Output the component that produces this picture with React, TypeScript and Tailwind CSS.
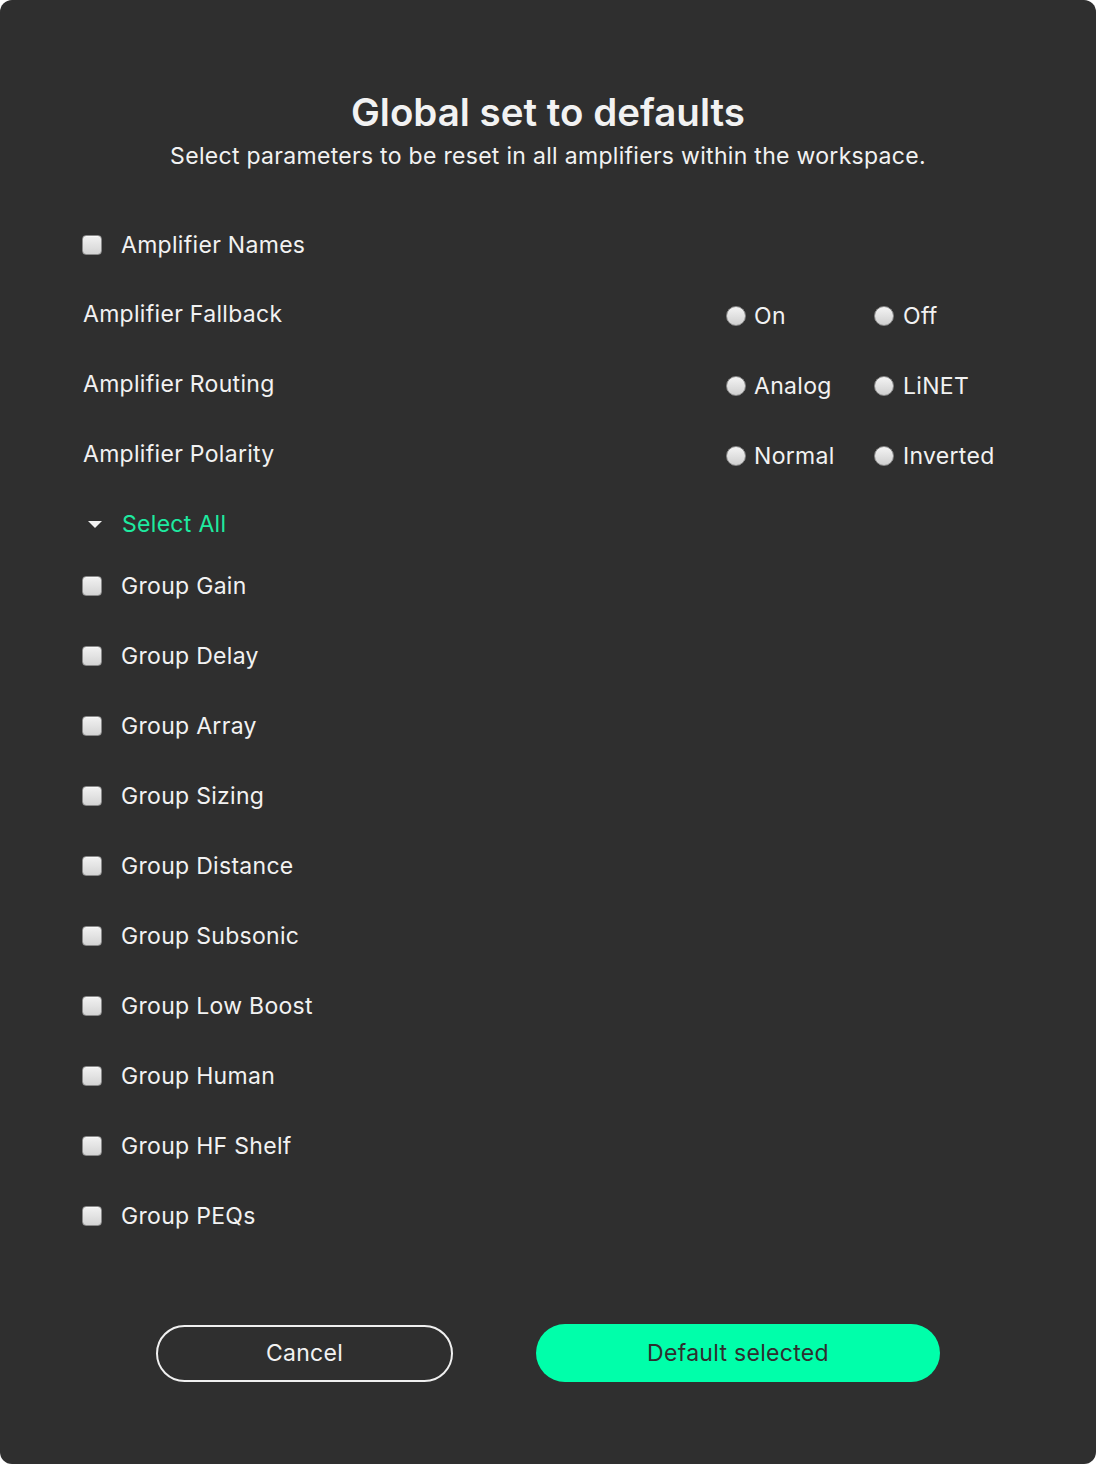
import React from "react";

const groups = [
  "Group Gain",
  "Group Delay",
  "Group Array",
  "Group Sizing",
  "Group Distance",
  "Group Subsonic",
  "Group Low Boost",
  "Group Human",
  "Group HF Shelf",
  "Group PEQs",
];

const radios: [string, string, string][] = [
  ["Amplifier Fallback", "On", "Off"],
  ["Amplifier Routing", "Analog", "LiNET"],
  ["Amplifier Polarity", "Normal", "Inverted"],
];

function Box() {
  return (
    <span className="block w-[20px] h-[20px] rounded-[4px] border border-[#8a8a8a] bg-gradient-to-b from-[#f2f2f2] to-[#d4d4d4] shadow-[inset_0_1px_0_rgba(255,255,255,0.6)]" />
  );
}

function Dot() {
  return (
    <span className="block w-[20px] h-[20px] rounded-full border border-[#8a8a8a] bg-gradient-to-b from-[#f4f4f4] to-[#cfcfcf]" />
  );
}

function CheckRow({ label, first }: { label: string; first?: boolean }) {
  return (
    <div className={first ? "flex items-center h-[70px] pt-[2px]" : "flex items-center h-[70px]"}>
      <Box />
      <span className="ml-[19px] text-[23px] tracking-[0.3px] text-[#f2f2f2]">{label}</span>
    </div>
  );
}

export default function App() {
  return (
    <div className="bg-white" style={{ fontFamily: "Inter, 'Liberation Sans', sans-serif" }}>
      <div className="h-[1464px] rounded-[12px] bg-[#2f2f2f] flex flex-col">
        <div className="pt-[89px] flex flex-col items-center text-[#f2f2f2]">
          <h1 className="text-[38.5px] leading-[46px] font-semibold">Global set to defaults</h1>
          <p className="mt-[7px] text-[23px] leading-[28px] tracking-[0.3px]">
            Select parameters to be reset in all amplifiers within the workspace.
          </p>
        </div>

        <div className="mt-[39px] pl-[82px]">
          <CheckRow label="Amplifier Names" first />
          {radios.map(([label, a, b]) => (
            <div key={label} className="flex items-center h-[70px]">
              <span className="w-[644px] pl-px text-[23px] tracking-[0.3px] text-[#f2f2f2]">{label}</span>
              <div className="w-[148px] flex items-center gap-[8px] pt-[4px]">
                <Dot />
                <span className="text-[23px] tracking-[0.3px] text-[#f2f2f2]">{a}</span>
              </div>
              <div className="flex items-center gap-[9px] pt-[4px]">
                <Dot />
                <span className="text-[23px] tracking-[0.3px] text-[#f2f2f2]">{b}</span>
              </div>
            </div>
          ))}
          <div className="flex items-center h-[62px] pt-2">
            <svg width="20" height="10" viewBox="0 0 20 10" className="ml-[3px]">
              <path d="M3 2 L17 2 L10 9 Z" fill="#f2f2f2" />
            </svg>
            <span className="ml-[17px] text-[23px] tracking-[0.3px] text-[#1eeaa0]">Select All</span>
          </div>
          {groups.map((g) => (
            <CheckRow key={g} label={g} />
          ))}
        </div>

        <div className="mt-[74px] flex">
          <button className="ml-[156px] w-[297px] h-[57px] rounded-full border-2 border-[#f0f0f0] text-[23px] tracking-[0.3px] text-[#f2f2f2]">
            Cancel
          </button>
          <button className="ml-[83px] -mt-px w-[404px] h-[58px] rounded-full bg-[#00ffaa] text-[23px] tracking-[0.3px] text-[#2f2f2f]">
            Default selected
          </button>
        </div>
      </div>
    </div>
  );
}
